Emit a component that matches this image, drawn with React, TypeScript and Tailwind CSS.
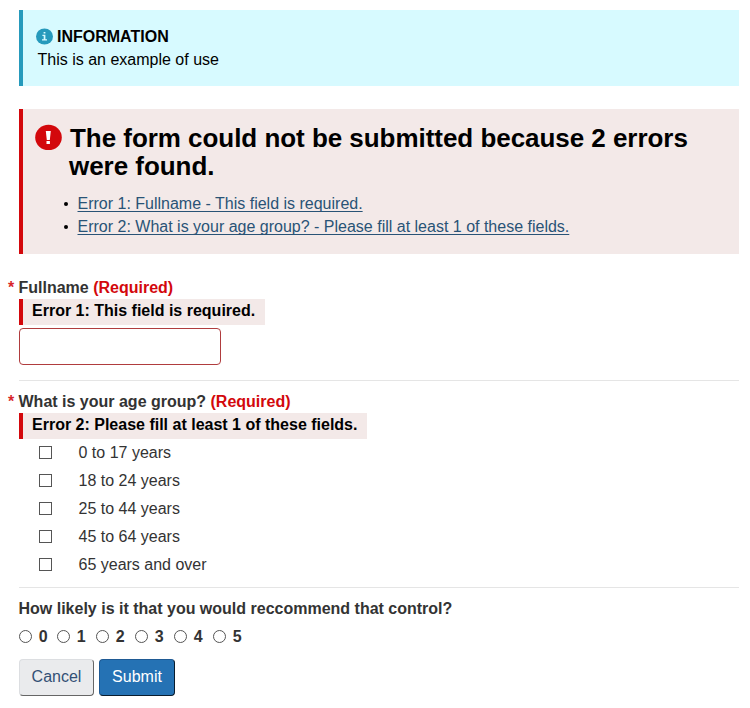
import type { ReactNode } from 'react';

const ages = ['0 to 17 years', '18 to 24 years', '25 to 44 years', '45 to 64 years', '65 years and over'];
const scores = [0, 1, 2, 3, 4, 5];
const errors = [
  'Error 1: Fullname - This field is required.',
  'Error 2: What is your age group? - Please fill at least 1 of these fields.',
];

function RequiredLabel({ children }: { children: ReactNode }) {
  return (
    <p className="-ml-[11px] flex font-bold">
      <span className="w-[10.5px] shrink-0 text-[#d3080c]/90">*</span>
      <span>{children} <span className="text-[#d3080c]">(Required)</span></span>
    </p>
  );
}

function FieldError({ children }: { children: ReactNode }) {
  return (
    <p className="h-[26px] w-fit border-l-4 border-[#d3080c] bg-[#f3e9e8] pl-[9px] pr-[10px] font-bold text-black">
      {children}
    </p>
  );
}

export default function App() {
  return (
    <main className="h-[708px] w-[750px] overflow-hidden bg-white pt-[10px] pl-[19px] pr-[11px] font-['Liberation_Sans',Arial,sans-serif] text-[16px] leading-[23px] text-[#333]">
      <section className="h-[76px] border-l-4 border-[#269abc] bg-[#d7faff] pl-[13px] pt-[15px] text-black">
        <div className="flex items-center">
          <svg className="mr-1 size-[17px]" viewBox="0 0 17 17">
            <ellipse cx="8.5" cy="8.5" rx="8.5" ry="8.1" fill="#269abc" />
            <path d="M7.6 4h1.8v1.6H7.6zM6.4 6.8h3v4.4h1.6v1.2H6v-1.2h1.7V8H6.4z" fill="#d7faff" />
          </svg>
          <b>INFORMATION</b>
        </div>
        <p className="pl-[1.5px]">This is an example of use</p>
      </section>

      <section className="mt-[23px] h-[145px] border-l-4 border-[#d3080c] bg-[#f3e9e8] pl-[12px] pt-[15px] text-black">
        <div className="flex">
          <svg className="mr-[7px] h-[27px] w-[27px]" viewBox="0 0 27 27">
            <ellipse cx="13.5" cy="13.4" rx="13.3" ry="12.7" fill="#d3080c" />
            <path d="M10.8 7h5l-1 9h-3zM11.5 17h3.4v3h-3.4z" fill="#fff" />
          </svg>
          <h2 className="text-[26px] font-bold leading-[28px] tracking-[-0.04px]">
            <span className="pl-px">The form could not be submitted because 2 errors</span>
            <br />
            were found.
          </h2>
        </div>
        <ul className="mt-[12px] pl-[43px]">
          {errors.map((e) => (
            <li key={e} className="-ml-[14px] flex items-center">
              <span className="mr-[9.5px] size-[4px] rounded-full bg-black" />
              <a className="text-[#295376] underline decoration-1 underline-offset-[2px] [text-decoration-skip-ink:none]">{e}</a>
            </li>
          ))}
        </ul>
      </section>

      <section className="mt-[22px] h-[105px] border-b border-[#e5e5e5]">
        <RequiredLabel>Fullname</RequiredLabel>
        <FieldError>Error 1: This field is required.</FieldError>
        <input className="mt-[3px] block h-[37px] w-[202px] rounded-[4px] border border-[#b03c3e]" />
      </section>

      <section className="h-[207px] border-b border-[#e5e5e5] pt-[9px]">
        <RequiredLabel>What is your age group?</RequiredLabel>
        <FieldError>Error 2: Please fill at least 1 of these fields.</FieldError>
        <div className="-mt-px">
          {ages.map((a) => (
            <label key={a} className="flex h-[28px] items-center pl-[20px]">
              <input type="checkbox" className="mr-[26.5px] size-[13px] appearance-none border border-[#555] bg-white" />
              {a}
            </label>
          ))}
        </div>
      </section>

      <section className="pt-[9px] font-bold">
        <p className="-ml-[0.5px]">How likely is it that you would reccommend that control?</p>
        <div className="mt-[5px] flex">
          {scores.map((s) => (
            <label key={s} className="flex w-[39px] items-center first:w-[38px]">
              <input type="radio" name="score" className="mr-[6.8px] size-[13px] appearance-none rounded-full border border-[#555] bg-white" />
              {s}
            </label>
          ))}
        </div>
        <div className="mt-[11px] flex gap-[5px] font-normal">
          <button className="h-[37px] w-[75px] rounded-[4px] border border-t-[#dcdee1] border-l-[#dcdee1] border-r-[#666] border-b-[#666] bg-[#eaebed] pb-[2px] text-[#335075]">Cancel</button>
          <button className="h-[37px] w-[76px] rounded-[4px] border border-t-[#1f5a94] border-l-[#1f5a94] border-r-[#091c2d] border-b-[#091c2d] bg-[#2572b4] pb-[2px] text-white">Submit</button>
        </div>
      </section>
    </main>
  );
}
